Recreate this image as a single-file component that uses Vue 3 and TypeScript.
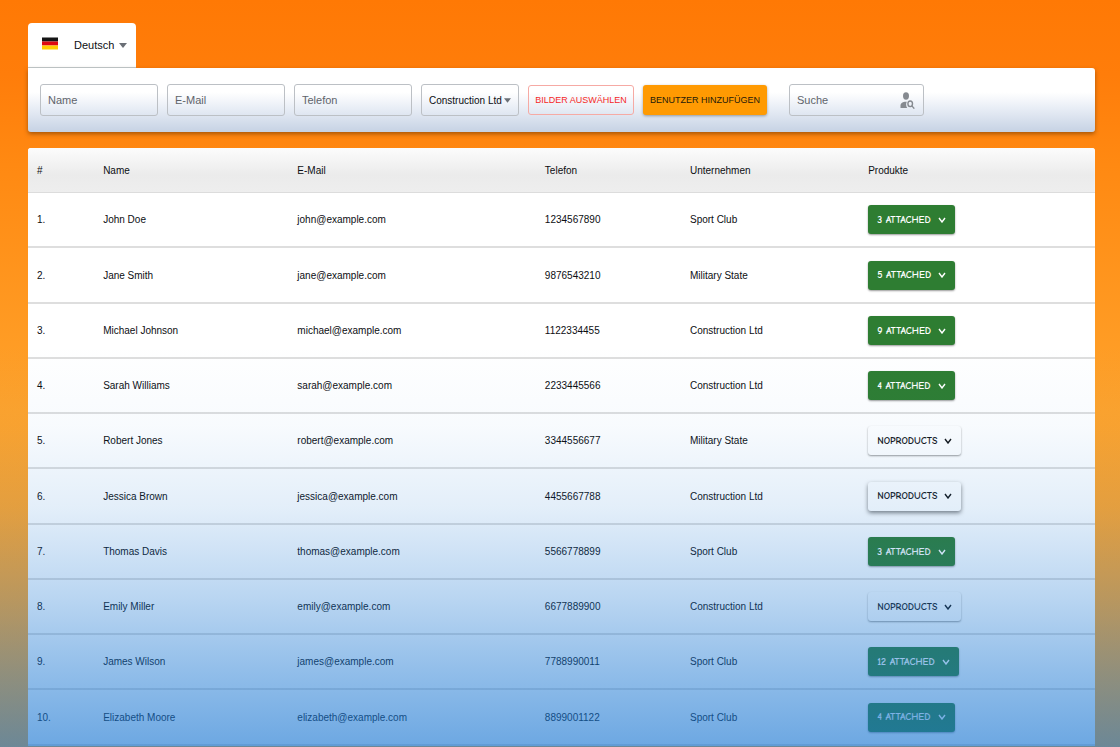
<script setup lang="ts">
import { ref } from 'vue'

interface User {
  name: string
  email: string
  phone: string
  company: string
  products: number
  hovered?: boolean
}

const language = ref('Deutsch')
const company = ref('Construction Ltd')
const name = ref('')
const email = ref('')
const phone = ref('')
const search = ref('')

const languages = ['Deutsch', 'English']
const companies = ['Construction Ltd', 'Sport Club', 'Military State']
const columns = ['#', 'Name', 'E-Mail', 'Telefon', 'Unternehmen', 'Produkte']

const users: User[] = [
  { name: 'John Doe', email: 'john@example.com', phone: '1234567890', company: 'Sport Club', products: 3 },
  { name: 'Jane Smith', email: 'jane@example.com', phone: '9876543210', company: 'Military State', products: 5 },
  { name: 'Michael Johnson', email: 'michael@example.com', phone: '1122334455', company: 'Construction Ltd', products: 9 },
  { name: 'Sarah Williams', email: 'sarah@example.com', phone: '2233445566', company: 'Construction Ltd', products: 4 },
  { name: 'Robert Jones', email: 'robert@example.com', phone: '3344556677', company: 'Military State', products: 0 },
  { name: 'Jessica Brown', email: 'jessica@example.com', phone: '4455667788', company: 'Construction Ltd', products: 0, hovered: true },
  { name: 'Thomas Davis', email: 'thomas@example.com', phone: '5566778899', company: 'Sport Club', products: 3 },
  { name: 'Emily Miller', email: 'emily@example.com', phone: '6677889900', company: 'Construction Ltd', products: 0 },
  { name: 'James Wilson', email: 'james@example.com', phone: '7788990011', company: 'Sport Club', products: 12 },
  { name: 'Elizabeth Moore', email: 'elizabeth@example.com', phone: '8899001122', company: 'Sport Club', products: 4 },
]
</script>

<template>
  <main class="page">
    <div class="language">
      <svg class="flag" viewBox="0 0 16 12" aria-hidden="true">
        <rect width="16" height="4" fill="#151515" />
        <rect y="4" width="16" height="4" fill="#dd0a12" />
        <rect y="8" width="16" height="4" fill="#ffce00" />
      </svg>
      <select v-model="language" aria-label="Sprache">
        <option v-for="item in languages" :key="item">{{ item }}</option>
      </select>
      <svg class="caret" viewBox="0 0 8 5" aria-hidden="true"><path d="M0 0h8L4 5z" /></svg>
    </div>

    <form class="toolbar" @submit.prevent>
      <input v-model="name" class="field" type="text" placeholder="Name" aria-label="Name" />
      <input v-model="email" class="field" type="email" placeholder="E-Mail" aria-label="E-Mail" />
      <input v-model="phone" class="field" type="tel" placeholder="Telefon" aria-label="Telefon" />
      <div class="company">
        <select v-model="company" aria-label="Unternehmen">
          <option v-for="item in companies" :key="item">{{ item }}</option>
        </select>
        <svg class="caret small" viewBox="0 0 8 5" aria-hidden="true"><path d="M0 0h8L4 5z" /></svg>
      </div>
      <button class="action outlined" type="button">BILDER AUSWÄHLEN</button>
      <button class="action filled" type="submit">BENUTZER HINZUFÜGEN</button>
      <div class="search">
        <input v-model="search" type="text" placeholder="Suche" aria-label="Suche" />
        <svg class="person" viewBox="0 0 15 17" aria-hidden="true">
          <ellipse cx="6" cy="4" rx="3" ry="3.7" />
          <path d="M0.500 16v-2.400c0-2.400 2.500-3.900 5.400-3.900.7 0 .9.100.9.100-1 1.800-.9 4.300.4 6.200z" />
          <ellipse class="lens" cx="10.200" cy="11.800" rx="2.300" ry="2.800" />
          <path class="lens" d="M11.900 13.900l2.400 2.700" />
        </svg>
      </div>
    </form>

    <table class="users">
      <thead>
        <tr>
          <th v-for="column in columns" :key="column" scope="col">{{ column }}</th>
        </tr>
      </thead>
      <tbody>
        <tr v-for="(user, index) in users" :key="user.email">
          <td>{{ index + 1 }}.</td>
          <td>{{ user.name }}</td>
          <td>{{ user.email }}</td>
          <td>{{ user.phone }}</td>
          <td>{{ user.company }}</td>
          <td>
            <button
              class="products"
              :class="{ attached: user.products > 0, raised: user.hovered }"
              type="button"
            >
              <span>{{ user.products ? `${user.products} ATTACHED` : 'NOPRODUCTS' }}</span>
              <svg viewBox="0 0 8 6" aria-hidden="true"><path d="M1 1l3 4 3-4" /></svg>
            </button>
          </td>
        </tr>
      </tbody>
    </table>
    <div class="tint"></div>
  </main>
</template>

<style>
body {
  margin: 0;
  overflow: hidden;
}
</style>

<style scoped>
.page {
  box-sizing: border-box;
  position: relative;
  height: 100vh;
  overflow: hidden;
  padding: 23px 25px 0 28px;
  background: linear-gradient(#ff7905 0%, #ff7d0a 10%, #ff8912 22%, #ffa32b 55%, #ffa72d 100%);
  color: #0c0e12;
  font-family: "Liberation Sans Narrow", "Arial Narrow", "Liberation Sans", Arial, sans-serif;
  font-size: 11px;
}

input,
select,
button {
  box-sizing: border-box;
  margin: 0;
  font: inherit;
  color: inherit;
}

select {
  appearance: none;
  border: 0;
  background: transparent;
  outline: 0;
  padding: 0;
}

.language {
  box-sizing: border-box;
  display: flex;
  align-items: center;
  width: 108px;
  height: 45px;
  padding: 0 9px 0 14px;
  border-bottom: 1px solid #c3cccf;
  border-radius: 4px 4px 0 0;
  background: #fff;
}

.language select {
  flex: 1;
  min-width: 0;
  margin-left: 16px;
}

.flag {
  width: 16px;
  height: 13px;
  margin-bottom: 4px;
}

.caret {
  width: 8px;
  height: 5px;
  fill: #6a6f76;
}

.caret.small {
  width: 7px;
}

.toolbar {
  box-sizing: border-box;
  display: flex;
  align-items: center;
  gap: 9px;
  height: 64px;
  padding: 0 12px;
  border-radius: 0 3px 3px 3px;
  background: linear-gradient(#fff 0%, #fff 38%, #e9eef6 62%, #c6d2e4 100%);
  box-shadow: 0 2px 4px rgba(80, 40, 0, 0.5);
}

.field,
.company,
.search {
  box-sizing: border-box;
  height: 32px;
  border: 1px solid #bcc0c5;
  border-radius: 3px;
  background: transparent;
}

.field {
  width: 118px;
  padding: 0 7px;
  outline: 0;
}

input::placeholder {
  color: #60646b;
  opacity: 1;
}

.company {
  display: flex;
  align-items: center;
  width: 98px;
  padding: 0 7px;
  font-size: 10px;
}

.company select {
  flex: 1;
  min-width: 0;
}

.action {
  height: 30px;
  padding: 0;
  border-radius: 3px;
  font-size: 9px;
  white-space: nowrap;
}

.outlined {
  width: 106px;
  border: 1px solid #f6aaa4;
  background: transparent;
  color: #f5291f;
}

.filled {
  width: 124px;
  border: 0;
  background: #ff9a02;
  color: #251a0a;
  box-shadow: 0 1px 3px rgba(0, 0, 0, 0.35);
}

.search {
  display: flex;
  align-items: center;
  width: 135px;
  margin-left: 13px;
  padding: 0 8px 0 7px;
}

.search input {
  flex: 1;
  min-width: 0;
  padding: 0;
  border: 0;
  outline: 0;
  background: transparent;
}

.person {
  width: 15px;
  height: 17px;
  fill: #868a90;
}

.lens {
  fill: none;
  stroke: #868a90;
  stroke-width: 1.4;
}

.users {
  width: 100%;
  margin-top: 16px;
  table-layout: fixed;
  border-collapse: separate;
  border-spacing: 0;
  border-radius: 3px 3px 0 0;
  overflow: hidden;
  background: #fff;
  font-size: 10px;
}

th,
td {
  box-sizing: border-box;
  padding: 0 9px;
  text-align: left;
  vertical-align: middle;
}

th {
  height: 45px;
  border-bottom: 1px solid #dcdcdc;
  font-weight: 400;
}

thead {
  background: linear-gradient(#fcfcfc, #ebebeb 60%, #eeeeee);
}

th:nth-child(1) { width: 6.2%; }
th:nth-child(2) { width: 18.2%; }
th:nth-child(3) { width: 23.2%; }
th:nth-child(4) { width: 13.6%; }
th:nth-child(5) { width: 16.7%; }

td {
  height: 55px;
  border-bottom: 2px solid #dedede;
}

tr:nth-child(4n + 2) td {
  height: 56px;
}

.products {
  display: inline-flex;
  align-items: center;
  gap: 7px;
  height: 29px;
  padding: 0 9px;
  border: 0;
  border-radius: 3px;
  background: #fff;
  color: #15171a;
  font-family: "Comic Sans MS", "Comic Neue", "Liberation Sans Narrow", "Liberation Sans", sans-serif;
  font-size: 10px;
  font-weight: 700;
  vertical-align: middle;
  box-shadow: 0 1px 2px rgba(0, 0, 0, 0.4);
}

.products svg {
  width: 8px;
  height: 6px;
  fill: none;
  stroke: currentColor;
  stroke-width: 1.4;
}

.attached {
  background: #2e7d32;
  color: #fff;
}

.raised {
  box-shadow: 0 2px 4px rgba(0, 0, 0, 0.5);
}

.tint {
  position: absolute;
  inset: 0;
  pointer-events: none;
  background: linear-gradient(
    rgba(25, 118, 210, 0) 46%,
    rgba(25, 118, 210, 0.03) 57%,
    rgba(25, 118, 210, 0.12) 68%,
    rgba(25, 118, 210, 0.3) 80%,
    rgba(25, 118, 210, 0.48) 90%,
    rgba(25, 118, 210, 0.64) 100%
  );
}
</style>
